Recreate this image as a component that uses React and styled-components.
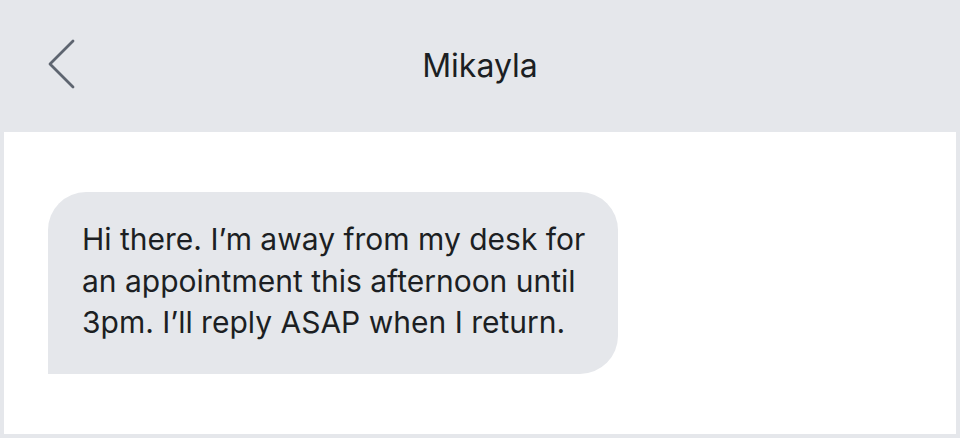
import styled, { createGlobalStyle } from 'styled-components';

const Global = createGlobalStyle`
  html, body {
    margin: 0;
    padding: 0;
    background: #e5e7eb;
  }
  body {
    font-family: Inter, "Noto Sans", "Liberation Sans", sans-serif;
    color: #1c1f23;
  }
`;

const Screen = styled.div`
  width: 960px;
  height: 438px;
  background: #e5e7eb;
  display: flex;
  flex-direction: column;
`;

const Header = styled.header`
  height: 132px;
  display: grid;
  grid-template-columns: 1fr auto 1fr;
  align-items: center;
  padding: 0 48px;
  box-sizing: border-box;
`;

const BackButton = styled.button`
  justify-self: start;
  align-self: start;
  margin-top: 39px;
  padding: 0;
  border: 0;
  background: none;
  display: flex;
  cursor: pointer;
`;

const Title = styled.h1`
  margin: 0;
  font-size: 32px;
  line-height: 40px;
  font-weight: 400;
  letter-spacing: 0;
  color: #1c1f23;
`;

const Thread = styled.main`
  margin: 0 4px;
  height: 302px;
  background: #ffffff;
  padding: 60px 0 0 44px;
  box-sizing: border-box;
`;

const Bubble = styled.div`
  width: 570px;
  height: 182px;
  box-sizing: border-box;
  padding: 27px 20px 0 34px;
  background: #e5e7eb;
  border-radius: 38px 38px 38px 0;
  font-size: 30px;
  line-height: 41.5px;
  color: #1c1f23;
  white-space: nowrap;
`;

const Chevron = () => (
  <svg width="28" height="50" viewBox="0 0 28 50" fill="none">
    <path
      d="M25 2 L2 25 L25 48"
      stroke="#5e6570"
      strokeWidth="2.8"
      strokeLinecap="round"
      strokeLinejoin="round"
    />
  </svg>
);

export default function App() {
  return (
    <Screen>
      <Global />
      <Header>
        <BackButton aria-label="Back">
          <Chevron />
        </BackButton>
        <Title>Mikayla</Title>
        <span />
      </Header>
      <Thread>
        <Bubble>
          Hi there. I’m away from my desk for
          <br />
          an appointment this afternoon until
          <br />
          3pm. I’ll reply ASAP when I return.
        </Bubble>
      </Thread>
    </Screen>
  );
}
